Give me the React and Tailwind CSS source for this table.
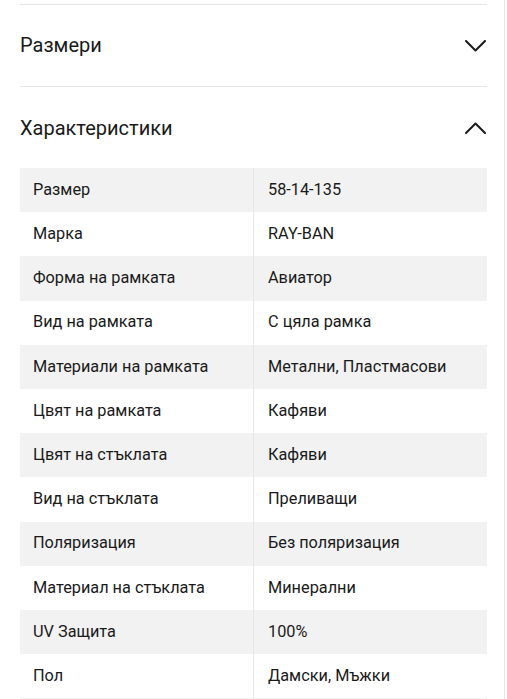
import React from 'react';

const specs = [
  ['Размер', '58-14-135'],
  ['Марка', 'RAY-BAN'],
  ['Форма на рамката', 'Авиатор'],
  ['Вид на рамката', 'С цяла рамка'],
  ['Материали на рамката', 'Метални, Пластмасови'],
  ['Цвят на рамката', 'Кафяви'],
  ['Цвят на стъклата', 'Кафяви'],
  ['Вид на стъклата', 'Преливащи'],
  ['Поляризация', 'Без поляризация'],
  ['Материал на стъклата', 'Минерални'],
  ['UV Защита', '100%'],
  ['Пол', 'Дамски, Мъжки'],
  ['', ''],
];

const Chevron = ({ up }) => (
  <svg width="21" height="12" viewBox="0 0 21 12" fill="none" className="shrink-0 mr-[1px]">
    <path
      d={up ? 'M1 11 L10.5 1.5 L20 11' : 'M1 1 L10.5 10.5 L20 1'}
      stroke="#1a1a1a"
      strokeWidth="2"
      strokeLinecap="round"
      strokeLinejoin="round"
    />
  </svg>
);

const Section = ({ title, open }) => (
  <div className={`flex items-center justify-between h-[82px] ${open ? '' : 'border-b border-[#e6e6e6]'}`}>
    <span className="text-[20px] leading-none text-[#1a1a1a] -mt-[1px]">{title}</span>
    <Chevron up={open} />
  </div>
);

export default function App() {
  return (
    <div className="w-[507px] h-[699px] overflow-hidden bg-white pr-[2px]" style={{ fontFamily: 'Roboto, "Noto Sans", sans-serif' }}>
      <div className="h-full border-r border-[#e4e4e4] pl-5 pr-[17px] pt-1">
        <div className="border-t border-[#e6e6e6]">
          <Section title="Размери" />
          <Section title="Характеристики" open />
        </div>
        <div className="-mt-[1px]">
          {specs.map(([label, value], i) => (
            <div key={i} className={`grid grid-cols-[234px_1fr] h-[44.2px] items-center text-[16.3px] text-[#1a1a1a] ${i % 2 === 0 ? 'bg-[#f2f2f2]' : 'bg-white'}`}>
              <span className="pl-[13px] border-r border-[#e9e7e1] h-full flex items-center">{label}</span>
              <span className="pl-[14px]">{value}</span>
            </div>
          ))}
        </div>
      </div>
    </div>
  );
}
